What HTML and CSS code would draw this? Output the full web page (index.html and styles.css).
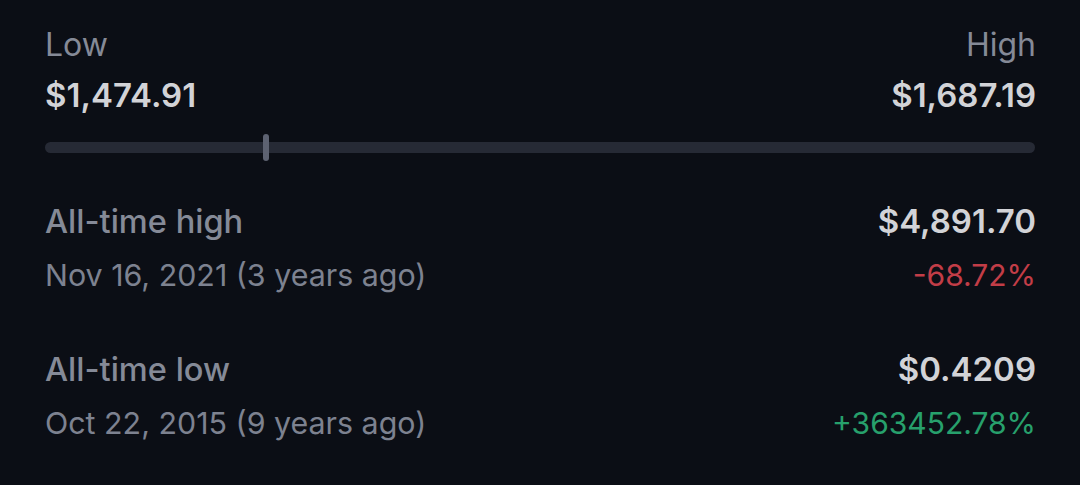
FILE: index.html
```html
<!DOCTYPE html>
<html>
<head>
<meta charset="utf-8">
<link rel="stylesheet" href="styles.css">
</head>
<body>
<div class="panel">
  <div class="range-head">
    <div class="col">
      <div class="label">Low</div>
      <div class="value">$1,474.91</div>
    </div>
    <div class="col right">
      <div class="label">High</div>
      <div class="value">$1,687.19</div>
    </div>
  </div>
  <div class="track">
    <div class="thumb" style="left: 22%"></div>
  </div>
  <div class="stat">
    <div class="stat-row">
      <div class="stat-label">All-time high</div>
      <div class="value">$4,891.70</div>
    </div>
    <div class="stat-row sub">
      <div class="date">Nov 16, 2021 (3 years ago)</div>
      <div class="pct down">-68.72%</div>
    </div>
  </div>
  <div class="stat">
    <div class="stat-row">
      <div class="stat-label">All-time low</div>
      <div class="value">$0.4209</div>
    </div>
    <div class="stat-row sub">
      <div class="date">Oct 22, 2015 (9 years ago)</div>
      <div class="pct up">+363452.78%</div>
    </div>
  </div>
</div>
</body>
</html>
```

FILE: styles.css
```css
html, body {
  margin: 0;
  padding: 0;
  background: #0b0e15;
}
body {
  font-family: Inter, "Noto Sans", sans-serif;
  width: 1080px;
  height: 485px;
  overflow: hidden;
}
.panel {
  padding: 25px 44px 0 45px;
}
.range-head {
  display: flex;
  justify-content: space-between;
}
.col {
  display: flex;
  flex-direction: column;
}
.col.right {
  align-items: flex-end;
}
.label {
  font-size: 32px;
  line-height: 40px;
  color: #858a97;
}
.value {
  font-size: 33px;
  line-height: 40px;
  font-weight: 600;
  color: #d2d3d7;
}
.col .value {
  margin-top: 10px;
}
.track {
  position: relative;
  height: 11px;
  border-radius: 6px;
  background: #262a35;
  margin-top: 27px;
  margin-right: 1px;
}
.thumb {
  position: absolute;
  top: -8px;
  width: 6px;
  height: 27px;
  border-radius: 3px;
  background: #5d6271;
}
.stat {
  margin-top: 48px;
}
.stat + .stat {
  margin-top: 55px;
}
.stat-row {
  display: flex;
  justify-content: space-between;
  align-items: baseline;
}
.stat-label {
  font-size: 32.6px;
  line-height: 40px;
  font-weight: 500;
  color: #858a97;
}
.sub {
  margin-top: 15px;
}
.date {
  font-size: 30.4px;
  line-height: 38px;
  color: #7d8290;
}
.pct {
  font-size: 30px;
  line-height: 38px;
}
.down { color: #c23d47; }
.up { color: #27a06c; }
```
